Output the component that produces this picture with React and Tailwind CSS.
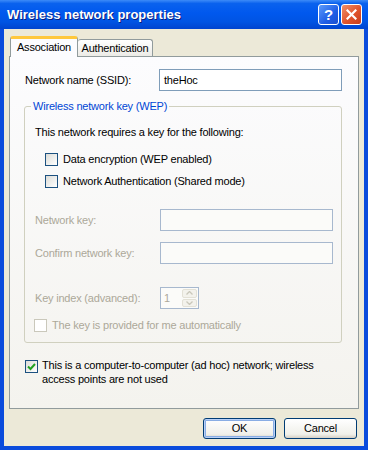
import React from 'react';

const CheckBox = ({ checked, disabled }) => (
  <span
    className={
      disabled
        ? 'w-[13px] h-[13px] shrink-0 border border-[#CAC8BB] bg-white flex items-center justify-center'
        : 'w-[13px] h-[13px] shrink-0 border border-[#1C5180] bg-[linear-gradient(135deg,#DCDCD7,#FFFFFF)] flex items-center justify-center'
    }
  >
    {checked && (
      <svg width="9" height="9" viewBox="0 0 9 9">
        <path d="M1 4.5 L3.5 7 L8 2" fill="none" stroke="#21A121" strokeWidth="2" />
      </svg>
    )}
  </span>
);

const TextBox = ({ value, disabled, className }) => (
  <div
    className={
      (disabled
        ? 'h-[22px] border border-[#A7B8CE] bg-[#FBFBF9] '
        : 'h-[22px] border border-[#7F9DB9] bg-white ') +
      'flex items-center px-[4px] ' +
      className
    }
  >
    {value}
  </div>
);

const Button = ({ children, primary }) => (
  <button
    className={
      primary
        ? 'w-[73px] h-[21px] rounded-[3px] border border-[#003C74] bg-[linear-gradient(to_bottom,#FFFFFF,#F0F0EA_80%,#D6D0C5)] shadow-[inset_0_0_0_1px_#B9D1F8,inset_0_0_0_2px_#89ADE4] text-[11px] text-black flex items-center justify-center'
        : 'w-[73px] h-[21px] rounded-[3px] border border-[#003C74] bg-[linear-gradient(to_bottom,#FFFFFF,#F0F0EA_80%,#D6D0C5)] text-[11px] text-black flex items-center justify-center'
    }
  >
    {children}
  </button>
);

export default function App() {
  return (
    <div className="w-[368px] h-[450px] flex flex-col bg-[#0A4BDC] font-['Liberation_Sans',Arial,sans-serif] text-[11px] tracking-[-0.2px] text-black select-none">
      {/* Title bar */}
      <div className="h-[29px] shrink-0 flex items-center pl-[7px] pr-[6px] bg-[linear-gradient(to_bottom,#3D8BF8_0%,#0A62EE_12%,#0058EE_45%,#0054E3_75%,#0044CF_100%)]">
        <span className="flex-1 text-white font-bold text-[13px] tracking-normal [text-shadow:1px_1px_0_#0A1E80]">
          Wireless network properties
        </span>
        <div className="flex gap-[2px]">
          <div className="w-[21px] h-[21px] rounded-[3px] border border-white bg-[linear-gradient(135deg,#5C9BFB,#1F5EE6_60%,#1A4FD0)] flex items-center justify-center text-white font-bold text-[15px] leading-none">
            ?
          </div>
          <div className="w-[21px] h-[21px] rounded-[3px] border border-white bg-[linear-gradient(135deg,#F0906A,#E0542C_55%,#C73D1C)] flex items-center justify-center">
            <svg width="11" height="11" viewBox="0 0 11 11">
              <path d="M1.5 1.5 L9.5 9.5 M9.5 1.5 L1.5 9.5" stroke="white" strokeWidth="2.2" strokeLinecap="square" />
            </svg>
          </div>
        </div>
      </div>

      {/* Dialog body */}
      <div className="flex-1 mx-[4px] mb-[4px] bg-[#ECE9D8] flex flex-col pt-[7px] px-[5px] pb-[7px]">
        {/* Tabs */}
        <div className="h-[20px] flex items-end pl-[1px]">
          <div className="relative z-10 -mb-px w-[68px] h-[21px] rounded-t-[3px] border-x border-[#919B9C] border-t-[3px] border-t-[#FFC83C] bg-[#FCFCFE] flex items-center justify-center pb-[1px]">
            Association
          </div>
          <div className="w-[75px] h-[17px] rounded-t-[3px] border-t border-r border-[#919B9C] bg-[linear-gradient(to_bottom,#FFFFFF,#ECEBE6)] flex items-center justify-center">
            Authentication
          </div>
        </div>

        {/* Tab panel */}
        <div className="flex-1 border border-[#919B9C] bg-[linear-gradient(to_bottom,#FCFCFE,#F4F3EE)] flex flex-col pl-[14px] pr-[16px]">
          <div className="mt-[12px] h-[22px] flex items-center">
            <span className="ml-[1px] w-[134px]">Network name (SSID):</span>
            <TextBox value="theHoc" className="flex-1" />
          </div>

          <fieldset className="mt-[8px] border border-[#D0D0BF] rounded-[3px] pl-[10px] pr-[8px] pb-[10px]">
            <legend className="ml-[-4px] px-[2px] leading-[14px] text-[#0046D5]">Wireless network key (WEP)</legend>

            <div className="mt-[12px] h-[14px] flex items-center">This network requires a key for the following:</div>

            <div className="mt-[13px] h-[14px] flex items-center gap-[5px] ml-[10px]">
              <CheckBox />
              <span>Data encryption (WEP enabled)</span>
            </div>
            <div className="mt-[8px] h-[14px] flex items-center gap-[5px] ml-[10px]">
              <CheckBox />
              <span>Network Authentication (Shared mode)</span>
            </div>

            <div className="mt-[21px] h-[22px] flex items-center text-[#ACA899]">
              <span className="w-[125px]">Network key:</span>
              <TextBox disabled className="flex-1" />
            </div>
            <div className="mt-[11px] h-[22px] flex items-center text-[#ACA899]">
              <span className="w-[125px]">Confirm network key:</span>
              <TextBox disabled className="flex-1" />
            </div>

            <div className="mt-[23px] h-[22px] flex items-center text-[#ACA899]">
              <span className="w-[125px]">Key index (advanced):</span>
              <div className="w-[39px] h-[22px] border border-[#A7B8CE] bg-[#FBFBF9] flex items-center pl-[3px] pr-px">
                <span className="flex-1">1</span>
                <div className="w-[15px] h-[18px] flex flex-col gap-px">
                  <div className="flex-1 rounded-[2px] border border-[#E3E1D6] bg-[#F3F2EC] flex items-center justify-center">
                    <svg width="7" height="4" viewBox="0 0 7 4">
                      <path d="M0.5 3.5 L3.5 0.5 L6.5 3.5" fill="none" stroke="#C9C7BA" strokeWidth="1.3" />
                    </svg>
                  </div>
                  <div className="flex-1 rounded-[2px] border border-[#E3E1D6] bg-[#F3F2EC] flex items-center justify-center">
                    <svg width="7" height="4" viewBox="0 0 7 4">
                      <path d="M0.5 0.5 L3.5 3.5 L6.5 0.5" fill="none" stroke="#C9C7BA" strokeWidth="1.3" />
                    </svg>
                  </div>
                </div>
              </div>
            </div>

            <div className="mt-[9px] h-[14px] flex items-center gap-[5px] -ml-px text-[#ACA899]">
              <CheckBox disabled />
              <span>The key is provided for me automatically</span>
            </div>
          </fieldset>

          <div className="mt-[15px] ml-[1px] flex items-start gap-[4px] leading-[14px]">
            <span className="mt-[2px]">
              <CheckBox checked />
            </span>
            <span>
              This is a computer-to-computer (ad hoc) network; wireless
              <br />
              access points are not used
            </span>
          </div>
        </div>

        {/* Buttons */}
        <div className="mt-[9px] flex justify-end gap-[8px] pr-[2px]">
          <Button primary>OK</Button>
          <Button>Cancel</Button>
        </div>
      </div>
    </div>
  );
}
